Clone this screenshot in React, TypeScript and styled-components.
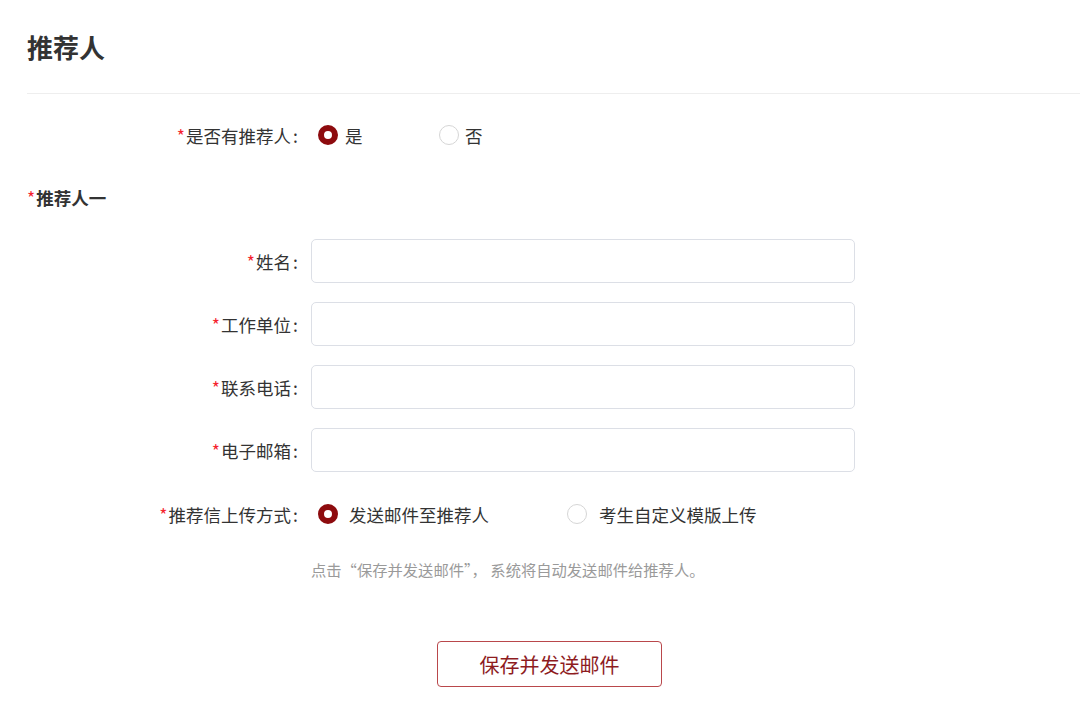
import React from "react";
import styled, { createGlobalStyle } from "styled-components";

const Global = createGlobalStyle`
  html, body { margin: 0; padding: 0; background: #fff; }
  body { font-family: "Microsoft YaHei", "Noto Sans CJK SC", "Noto Sans", sans-serif; color: #333; }
  * { box-sizing: border-box; }
`;

const Page = styled.div`
  width: 1080px;
  height: 716px;
  padding-left: 27px;
  overflow: hidden;
`;

const Header = styled.div`
  height: 94px;
  border-bottom: 1px solid #eeeeee;
  display: flex;
  align-items: center;
  padding-top: 1px;
`;

const Title = styled.h2`
  margin: 0;
  font-size: 26px;
  font-weight: 700;
  color: #333;
  line-height: 34px;
`;

const Row = styled.div<{ $top: number; $height?: number }>`
  display: grid;
  grid-template-columns: 273px 1fr;
  column-gap: 11px;
  align-items: center;
  margin-top: ${(p) => p.$top}px;
  min-height: ${(p) => p.$height ?? 44}px;
`;

const Label = styled.label`
  text-align: right;
  font-size: 17.5px;
  color: #333;
  white-space: nowrap;
`;

const Colon = styled.span`
  display: inline-block;
  width: 9px;
  text-align: center;
`;

const Star = styled.span`
  color: #f5222d;
  margin-right: 1px;
  font-weight: 400;
`;

const SectionTitle = styled.div`
  margin-top: 29px;
  font-size: 17.5px;
  font-weight: 700;
  line-height: 24px;
  color: #333;
`;

const Input = styled.input`
  width: 544px;
  height: 44px;
  border: 1px solid #dcdfe6;
  border-radius: 5px;
  outline: none;
  padding: 0 12px;
  font-size: 16px;
  background: #fff;
`;

const RadioGroup = styled.div`
  display: flex;
  align-items: center;
  padding-left: 7px;
`;

const RadioItem = styled.label<{ $width: number; $gap: number }>`
  display: flex;
  align-items: center;
  gap: ${(p) => p.$gap}px;
  width: ${(p) => p.$width}px;
  font-size: 17.5px;
  color: #333;
  cursor: pointer;
`;

const RadioDot = styled.span<{ $checked?: boolean }>`
  width: 20px;
  height: 20px;
  border-radius: 50%;
  flex: none;
  background: #fff;
  border: ${(p) => (p.$checked ? "6px solid #8d0b0e" : "1px solid #d6d6d6")};
`;

const Hint = styled.div`
  grid-column: 2;
  font-size: 15.3px;
  line-height: 20px;
  color: #9a9a9a;
`;

const Button = styled.button`
  grid-column: 2;
  justify-self: start;
  margin-left: 126px;
  width: 225px;
  height: 46px;
  border: 1px solid #b9474b;
  border-radius: 4px;
  background: #fff;
  color: #8e1c1f;
  font-size: 20px;
  font-family: inherit;
  cursor: pointer;
`;

const fields = ["姓名", "工作单位", "联系电话", "电子邮箱"];

export default function App() {
  return (
    <Page>
      <Global />
      <Header>
        <Title>推荐人</Title>
      </Header>

      <Row $top={19}>
        <Label>
          <Star>*</Star>是否有推荐人<Colon>:</Colon>
        </Label>
        <RadioGroup>
          <RadioItem $width={121} $gap={7}>
            <RadioDot $checked />
            是
          </RadioItem>
          <RadioItem $width={80} $gap={6}>
            <RadioDot />
            否
          </RadioItem>
        </RadioGroup>
      </Row>

      <SectionTitle>
        <Star>*</Star>推荐人一
      </SectionTitle>

      {fields.map((f, i) => (
        <Row key={f} $top={i === 0 ? 29 : 19}>
          <Label>
            <Star>*</Star>
            {f}
            <Colon>:</Colon>
          </Label>
          <Input type="text" />
        </Row>
      ))}

      <Row $top={20}>
        <Label>
          <Star>*</Star>推荐信上传方式<Colon>:</Colon>
        </Label>
        <RadioGroup>
          <RadioItem $width={249} $gap={11}>
            <RadioDot $checked />
            发送邮件至推荐人
          </RadioItem>
          <RadioItem $width={220} $gap={12}>
            <RadioDot />
            考生自定义模版上传
          </RadioItem>
        </RadioGroup>
      </Row>

      <Row $top={23} $height={20}>
        <Hint>点击“保存并发送邮件”， 系统将自动发送邮件给推荐人。</Hint>
      </Row>

      <Row $top={62} $height={46}>
        <Button>保存并发送邮件</Button>
      </Row>
    </Page>
  );
}
